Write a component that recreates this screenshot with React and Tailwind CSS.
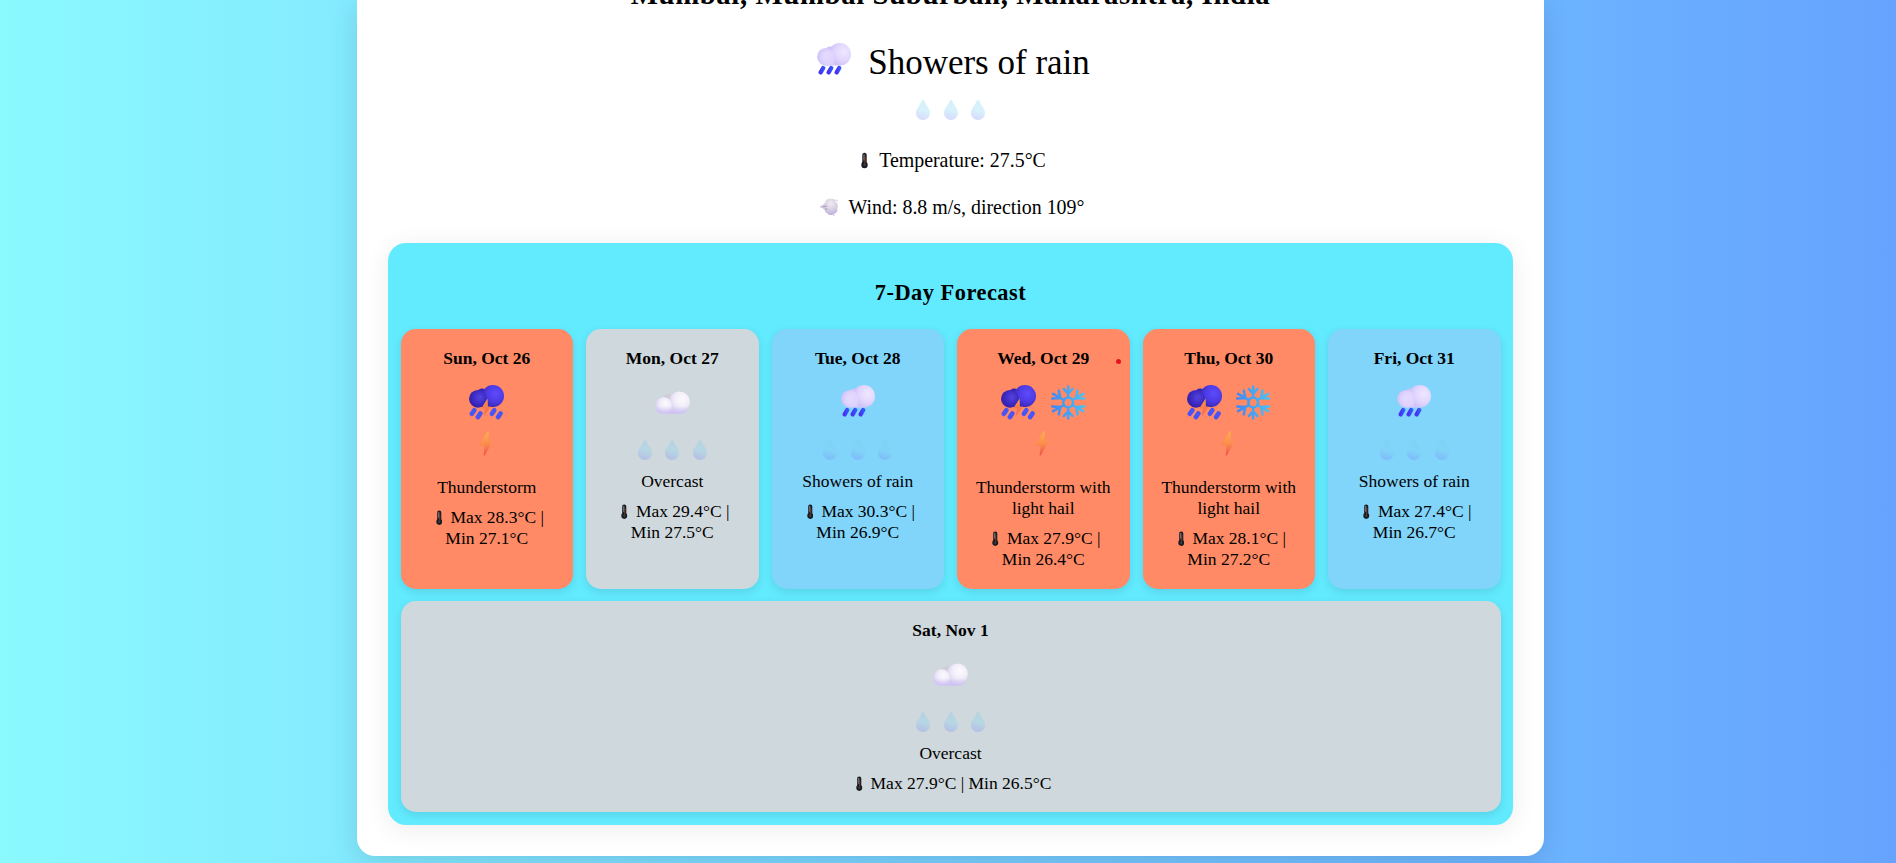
import React, { useId } from "react";

function ShowerIcon({ className = "" }) {
  const id = useId();
  return (
    <svg viewBox="0 0 34 32" className={`h-8 w-[34px] ${className}`}>
      <defs>
        <radialGradient id={`${id}a`} cx="0.68" cy="0.4" r="0.7">
          <stop offset="0" stopColor="#efe7ff" />
          <stop offset="0.55" stopColor="#e1d6fd" />
          <stop offset="1" stopColor="#cabcf6" />
        </radialGradient>
        <radialGradient id={`${id}b`} cx="0.6" cy="0.5" r="0.6">
          <stop offset="0" stopColor="#e8defe" />
          <stop offset="0.6" stopColor="#dfd3fd" />
          <stop offset="1" stopColor="#cdc0f7" />
        </radialGradient>
        <linearGradient id={`${id}c`} x1="0" x2="1">
          <stop offset="0" stopColor="#4a30f0" />
          <stop offset="1" stopColor="#3355fb" />
        </linearGradient>
      </defs>
      <circle cx="13" cy="8.500" r="5" fill="#cdc4f6" />
      <path d="M9 12H24V22.600H9z" fill="#d6c9fb" />
      <circle cx="22.800" cy="11.300" r="11.300" fill={`url(#${id}a)`} />
      <circle cx="9" cy="13.800" r="8.900" fill={`url(#${id}b)`} />
      <path d="M9 12H17V21.500H9z" fill="#dfd3fd" opacity="0.600" />
      <g stroke={`url(#${id}c)`} strokeWidth="4.300" strokeLinecap="round">
        <path d="M6.200 25L3.700 29.300" />
        <path d="M14.200 25L11.700 29.300" />
        <path d="M22.200 25L19.700 29.300" />
      </g>
    </svg>
  );
}

function StormIcon() {
  const id = useId();
  return (
    <svg viewBox="0 0 35 35" className="size-[35px]">
      <defs>
        <radialGradient id={`${id}a`} cx="0.62" cy="0.38" r="0.75">
          <stop offset="0" stopColor="#5f4bfb" />
          <stop offset="0.5" stopColor="#4d3be6" />
          <stop offset="1" stopColor="#35209f" />
        </radialGradient>
        <radialGradient id={`${id}b`} cx="0.6" cy="0.42" r="0.65">
          <stop offset="0" stopColor="#5344dd" />
          <stop offset="0.5" stopColor="#402dc8" />
          <stop offset="1" stopColor="#2f1c9e" />
        </radialGradient>
        <linearGradient id={`${id}c`} x1="0" y1="0" x2="0" y2="1">
          <stop offset="0" stopColor="#fb9a48" />
          <stop offset="1" stopColor="#f65f52" />
        </linearGradient>
      </defs>
      <circle cx="13" cy="8.500" r="5" fill="#3825ad" />
      <path d="M9 12H25V22H9z" fill="#3722b0" />
      <circle cx="24" cy="11" r="11" fill={`url(#${id}a)`} />
      <circle cx="8.900" cy="13.800" r="8.900" fill={`url(#${id}b)`} />
      <path d="M18.600 13.500L12.200 23.500H16L14.900 31L21.800 21.500H18.900z" fill={`url(#${id}c)`} />
      <g stroke="#4a54f4" strokeWidth="4.600" strokeLinecap="round">
        <path d="M5.300 25.200L2.900 28.800" />
        <path d="M11.300 28.500L8.900 32.100" />
        <path d="M25.300 25.200L22.900 28.800" />
        <path d="M31.500 28.500L29.100 32.100" />
      </g>
    </svg>
  );
}

function CloudIcon() {
  const id = useId();
  return (
    <svg viewBox="0 0 35 35" className="size-[35px]">
      <defs>
        <radialGradient id={`${id}a`} cx="0.62" cy="0.36" r="0.7">
          <stop offset="0" stopColor="#fcfafe" />
          <stop offset="0.5" stopColor="#f2eef9" />
          <stop offset="1" stopColor="#d6ccef" />
        </radialGradient>
        <radialGradient id={`${id}b`} cx="0.6" cy="0.36" r="0.68">
          <stop offset="0" stopColor="#fcfafe" />
          <stop offset="0.5" stopColor="#f0ebf9" />
          <stop offset="1" stopColor="#d2c7f0" />
        </radialGradient>
        <linearGradient id={`${id}c`} x1="0" y1="0" x2="0" y2="1">
          <stop offset="0" stopColor="#cfccd4" />
          <stop offset="0.45" stopColor="#dfd9ef" />
          <stop offset="1" stopColor="#cfc3f2" />
        </linearGradient>
        <linearGradient id={`${id}d`} x1="0" y1="0" x2="0" y2="1">
          <stop offset="0.55" stopColor="#cfc2f4" stopOpacity="0" />
          <stop offset="1" stopColor="#cfc2f4" />
        </linearGradient>
        <clipPath id={`${id}e`}>
          <path d="M0 0H35V28.800H0z" />
        </clipPath>
      </defs>
      <g clipPath={`url(#${id}e)`}>
        <circle cx="13" cy="14" r="5" fill="#d0cdd6" />
        <path d="M8 15H25V28.800H8z" fill={`url(#${id}c)`} />
        <circle cx="24.400" cy="17" r="10.500" fill={`url(#${id}a)`} />
        <circle cx="8.600" cy="20.800" r="8.500" fill={`url(#${id}b)`} />
        <path d="M8.600 12.300A8.500 8.500 0 0 0 8.600 29.300H24A11 11 0 0 0 34.900 18V12z" fill={`url(#${id}d)`} />
      </g>
    </svg>
  );
}

function SnowflakeIcon() {
  const id = useId();
  return (
    <svg viewBox="0 0 35 35" className="size-[35px]">
      <defs>
        <linearGradient id={`${id}a`} gradientUnits="userSpaceOnUse" x1="0" y1="18" x2="35" y2="14">
          <stop offset="0" stopColor="#3d86f8" />
          <stop offset="1" stopColor="#49c5f4" />
        </linearGradient>
      </defs>
      <g fill="none" stroke={`url(#${id}a)`} strokeWidth="2.500" strokeLinecap="round" strokeLinejoin="round">
        <circle cx="17.200" cy="17.500" r="4.900" />
        <path d="M17.200 12.600V1.500M12.900 4L17.200 8.600L21.500 4" />
        <path d="M17.200 22.400V33.500M12.900 31L17.200 26.400L21.500 31" />
        <path d="M21.400 15L32.300 8.800M26.600 5.600L25.100 12.900L33.200 13.600" />
        <path d="M13 20L2.100 26.200M7.800 29.400L9.300 22.100L1.300 21.400" />
        <path d="M21.400 20L32.300 26.200M26.600 29.400L25.100 22.100L33.200 21.400" />
        <path d="M13 15L2.100 8.800M7.800 5.600L9.300 12.900L1.300 13.600" />
      </g>
    </svg>
  );
}

function Drop() {
  const id = useId();
  return (
    <svg viewBox="0 0 14 20" className="h-5 w-3.5">
      <defs>
        <linearGradient id={id} x1="0.6" y1="0" x2="0.4" y2="1">
          <stop offset="0" stopColor="#7cc8ea" />
          <stop offset="0.5" stopColor="#80d6f4" />
          <stop offset="1" stopColor="#7a86fa" />
        </linearGradient>
      </defs>
      <path d="M7 0C8 0 8.300 1.200 9 2.600C10.500 5.800 14 9 14 13.200A7 6.800 0 0 1 0 13.200C0 9 3.500 5.800 5 2.600C5.700 1.200 6 0 7 0z" fill={`url(#${id})`} />
    </svg>
  );
}

function Drops() {
  return (
    <div className="flex h-5 justify-center gap-[13.5px] opacity-30">
      <Drop />
      <Drop />
      <Drop />
    </div>
  );
}

function Bolt() {
  const id = useId();
  return (
    <div className="flex h-[25px] justify-center pr-[2px]">
      <svg viewBox="0 0 14 25" className="h-[25px] w-3.5">
        <defs>
          <linearGradient id={id} x1="0" y1="0" x2="0" y2="1">
            <stop offset="0" stopColor="#fdb04c" />
            <stop offset="0.5" stopColor="#fb8e4c" />
            <stop offset="1" stopColor="#f2504f" />
          </linearGradient>
        </defs>
        <path d="M8.600 0.300L9.900 0.300L9.300 10.300H13.600L5.800 24.500H4.600L5.600 14.500H0.300z" fill={`url(#${id})`} />
      </svg>
    </div>
  );
}

function Thermometer({ className }) {
  return (
    <svg viewBox="0 0 7 16" className={`inline-block ${className}`}>
      <path d="M3.500 0.200C4.900 0.200 5.700 1.200 5.700 2.400V9.600C6.400 10.300 6.700 11.200 6.700 12.400A3.200 3.300 0 0 1 0.300 12.400C0.300 11.200 0.600 10.300 1.300 9.600V2.400C1.300 1.200 2.100 0.200 3.500 0.200z" fill="#1a1c22" />
      <path d="M3 1.800V8" stroke="#8e9299" strokeWidth="1" />
      <path d="M4 4V11" stroke="#8a4034" strokeWidth="0.900" />
      <circle cx="3.500" cy="12.400" r="1.100" fill="#4a4244" />
    </svg>
  );
}

function WindFace() {
  const id = useId();
  return (
    <svg viewBox="0 0 18 18" className="mr-[11px] ml-[3px] inline-block size-[18px] align-[-2px]">
      <defs>
        <radialGradient id={id} cx="0.6" cy="0.3" r="0.75">
          <stop offset="0" stopColor="#eeebf1" />
          <stop offset="0.5" stopColor="#d8cfe2" />
          <stop offset="1" stopColor="#bba9dd" />
        </radialGradient>
      </defs>
      <path d="M5 4.500C5.500 1.500 8.500 0 11.200 1C13.500 0.400 15.600 1.800 16 4C18 5 18.200 8.500 17.300 10.500C17.800 13 16.700 15 14.700 15.500C12.500 17.800 8.300 17.500 7 15C5.200 14.400 4.500 12.800 4.700 11.500C3.200 11.500 3.200 10.300 2 9.800C0.300 9.800 0 9 0.300 8.300C2 7.500 4 6.500 5 4.500z" fill={`url(#${id})`} />
      <path d="M3.500 8.600L6.500 8M6.800 10.800L5.500 11.200" stroke="#9d8fa9" strokeWidth="0.900" strokeLinecap="round" />
      <circle cx="17" cy="2.300" r="0.900" fill="#d9cfe4" />
      <circle cx="13.800" cy="17.300" r="0.700" fill="#c9bce0" />
    </svg>
  );
}

const kinds = {
  storm: { bg: "bg-[#ff8a65]", icons: [StormIcon] },
  hail: { bg: "bg-[#ff8a65]", icons: [StormIcon, SnowflakeIcon] },
  cloud: { bg: "bg-[#cfd8dc]", icons: [CloudIcon] },
  rain: { bg: "bg-[#81d4fa]", icons: [ShowerIcon] },
};

const days = [
  { date: "Sun, Oct 26", kind: "storm", label: "Thunderstorm", max: "28.3", min: "27.1" },
  { date: "Mon, Oct 27", kind: "cloud", label: "Overcast", max: "29.4", min: "27.5" },
  { date: "Tue, Oct 28", kind: "rain", label: "Showers of rain", max: "30.3", min: "26.9" },
  { date: "Wed, Oct 29", kind: "hail", label: "Thunderstorm with light hail", max: "27.9", min: "26.4", marker: true },
  { date: "Thu, Oct 30", kind: "hail", label: "Thunderstorm with light hail", max: "28.1", min: "27.2" },
  { date: "Fri, Oct 31", kind: "rain", label: "Showers of rain", max: "27.4", min: "26.7" },
  { date: "Sat, Nov 1", kind: "cloud", label: "Overcast", max: "27.9", min: "26.5", wide: true },
];

function DayCard({ day }) {
  const kind = kinds[day.kind];
  const stormy = day.kind === "storm" || day.kind === "hail";
  return (
    <div
      className={`relative rounded-[15px] px-[18px] pt-[18.5px] text-center text-[17.5px] leading-[21px] shadow-[0_3px_9px_rgba(0,0,0,0.1)] ${kind.bg} ${day.wide ? "col-span-6 h-[211px]" : "h-[260px]"}`}
    >
      <div className="font-bold">{day.date}</div>
      <div className="mt-[16.5px] flex h-[35px] justify-center gap-[14.5px]">
        {kind.icons.map((Icon, i) => (
          <Icon key={i} />
        ))}
      </div>
      <div className={stormy ? "mt-[11px]" : "mt-5"}>{stormy ? <Bolt /> : <Drops />}</div>
      <div className={stormy ? "mt-[21px]" : "mt-[11px]"}>{day.label}</div>
      <div className="mt-[9px]">
        <Thermometer className="mr-2 ml-[6.5px] h-[15.5px] w-[6.5px] align-[-2.5px]" />
        {`Max ${day.max}°C | Min ${day.min}°C`}
      </div>
      {day.marker && <span className="absolute top-[30px] right-[9px] size-[5px] rounded-full bg-[#e8121c]" />}
    </div>
  );
}

export default function App() {
  return (
    <div className="h-[863px] overflow-hidden bg-linear-to-r from-[#8bfaff] to-[#66a3ff] pl-[357px] font-['Liberation_Serif',serif] text-black">
      <main className="flex h-[856px] w-[1187px] flex-col rounded-b-[18px] bg-white px-[31px] text-center shadow-[0_7px_28px_rgba(0,0,0,0.12)]">
        <h1 className="-mt-[23px] text-[28.8px] leading-[34px] font-bold tracking-[0.6px]">
          Mumbai, Mumbai Suburban, Maharashtra, India
        </h1>
        <div className="mt-8 flex h-10 items-start justify-center gap-[17px] pl-[6px] text-[35px] leading-10">
          <ShowerIcon />
          <span>Showers of rain</span>
        </div>
        <div className="mt-[17px]">
          <Drops />
        </div>
        <p className="mt-7 text-[19.9px] leading-6">
          <Thermometer className="mr-[11px] ml-[6px] h-[17px] w-[7px] align-[-2px]" />
          Temperature: 27.5°C
        </p>
        <p className="mt-[23px] text-[19.9px] leading-6">
          <WindFace />
          Wind: 8.8 m/s, direction 109°
        </p>
        <section className="mt-6 h-[582px] rounded-[18px] bg-[#62eaff] px-[12.5px] pt-[37px] shadow-[0_4px_26px_rgba(0,0,0,0.08)]">
          <h2 className="text-[22.4px] leading-[26px] font-bold tracking-[0.5px]">7-Day Forecast</h2>
          <div className="mt-[23px] grid grid-cols-6 gap-x-[13px] gap-y-3">
            {days.map((day) => (
              <DayCard key={day.date} day={day} />
            ))}
          </div>
        </section>
      </main>
    </div>
  );
}
